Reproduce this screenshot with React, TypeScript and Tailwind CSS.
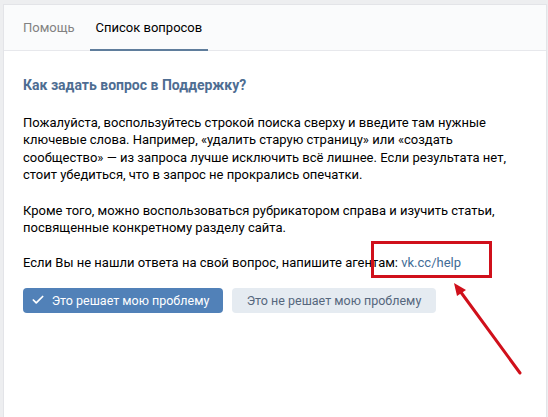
import { Check } from 'lucide-react';

export default function App() {
    return (
        <div className="relative w-[548px] h-[417px] bg-[#edeef0] pt-[4px] pl-[3px] pr-px overflow-hidden font-['Roboto',sans-serif] text-[13px] text-black">
            <div className="h-[420px] bg-white border border-[#e3e4e8]">
                {/* Tabs */}
                <div className="h-[46px] bg-[#fafbfc] border-b border-[#e7e8ec] flex pl-[13px] gap-[9px]">
                    <div className="px-[6px] pt-[2px] flex items-center text-[#828282] border-b-2 border-transparent">Помощь</div>
                    <div className="px-[6px] pt-[2px] flex items-center border-b-2 border-[#5f7d9c] mb-[-1px]">Список вопросов</div>
                </div>

                {/* Content */}
                <div className="pl-[19px] pr-4 pt-[26px] leading-[17.6px]">
                    <h2 className="font-bold text-[14px] text-[#4e6d92]">Как задать вопрос в Поддержку?</h2>
                    <p className="mt-[19px]">
                        Пожалуйста, воспользуйтесь строкой поиска сверху и введите там нужные<br />
                        ключевые слова. Например, «удалить старую страницу» или «создать<br />
                        сообщество» — из запроса лучше исключить всё лишнее. Если результата нет,<br />
                        стоит убедиться, что в запрос не прокрались опечатки.
                    </p>
                    <p className="mt-[17.6px]">
                        Кроме того, можно воспользоваться рубрикатором справа и изучить статьи,<br />
                        посвященные конкретному разделу сайта.
                    </p>
                    <p className="mt-[17.6px]">
                        Если Вы не нашли ответа на свой вопрос, напишите агентам: <a href="#" className="text-[#426c96]">vk.cc/help</a>
                    </p>
                    <div className="flex gap-[9px] mt-[16px] text-[12.5px]">
                        <button className="w-[200px] h-[25px] rounded-[4px] bg-[#5181b8] text-white flex items-center justify-center gap-[7px] pr-[6px]">
                            <Check size={14} strokeWidth={3} />
                            Это решает мою проблему
                        </button>
                        <button className="w-[204px] h-[25px] rounded-[4px] bg-[#e5ebf1] text-[#55677d]">
                            Это не решает мою проблему
                        </button>
                    </div>
                </div>
            </div>

            {/* Annotation */}
            <svg className="absolute left-0 top-0 pointer-events-none" width="548" height="417">
                <rect x="372.5" y="242.5" width="118" height="34" fill="none" stroke="#d0101b" strokeWidth="3" />
                <line x1="520" y1="373" x2="460" y2="291" stroke="#d0101b" strokeWidth="3" strokeLinecap="round" />
                <polygon points="454,283 466,290 457,296" fill="#d0101b" />
            </svg>
        </div>
    );
}
